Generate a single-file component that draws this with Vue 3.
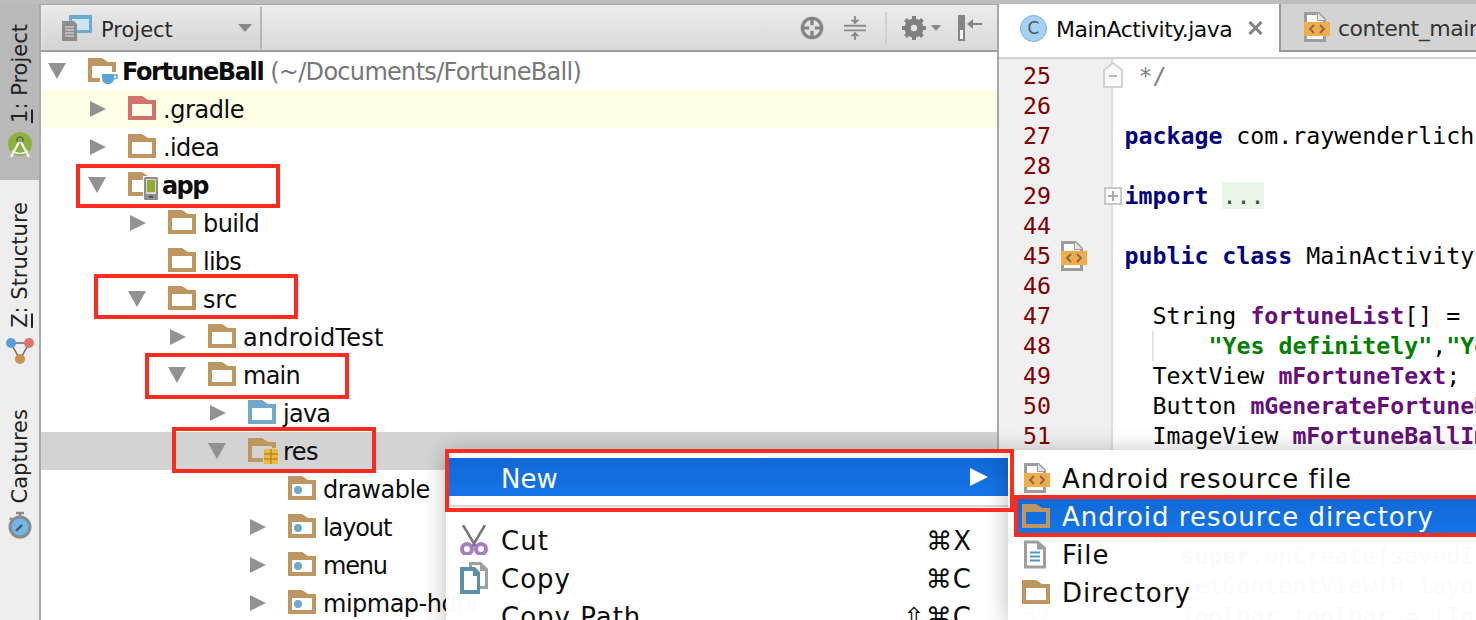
<script setup>
const tree = [
  { level: 0, arrow: 'down', text: 'FortuneBall', bold: true, track: -1.4, hint: ' (~/Documents/FortuneBall)', badge: 'cup' },
  { level: 1, arrow: 'right', text: '.gradle', tint: 'red', yellow: true, track: -0.45 },
  { level: 1, arrow: 'right', text: '.idea', track: -0.6 },
  { level: 1, arrow: 'down', text: 'app', bold: true, track: -1.6, badge: 'phone' },
  { level: 2, arrow: 'right', text: 'build', track: -0.6 },
  { level: 2, text: 'libs', track: -0.75 },
  { level: 2, arrow: 'down', text: 'src', track: -0.3 },
  { level: 3, arrow: 'right', text: 'androidTest', track: 0.2 },
  { level: 3, arrow: 'down', text: 'main', track: -0.75 },
  { level: 4, arrow: 'right', text: 'java', tint: 'blue', track: -0.75 },
  { level: 4, arrow: 'down', text: 'res', badge: 'db', selected: true, track: -0.6 },
  { level: 5, text: 'drawable', badge: 'dot', track: -0.5 },
  { level: 5, arrow: 'right', text: 'layout', badge: 'dot', track: -1.1 },
  { level: 5, arrow: 'right', text: 'menu', badge: 'dot', track: -1.2 },
  { level: 5, arrow: 'right', text: 'mipmap-hdpi', badge: 'dot', track: -0.5 },
]

const code = [
  { n: 25, parts: [[' */', 'cm']], fold: 'end' },
  { n: 26, parts: [] },
  { n: 27, parts: [['package', 'kw'], [' com.raywenderlich.fortuneball;', '']] },
  { n: 28, parts: [] },
  { n: 29, parts: [['import', 'kw'], [' ', ''], ['...', 'folded']], fold: 'plus' },
  { n: 44, parts: [] },
  { n: 45, parts: [['public class', 'kw'], [' MainActivity extends', '']], mark: true },
  { n: 46, parts: [] },
  { n: 47, parts: [['  String ', ''], ['fortuneList', 'fd'], ['[] = {', '']] },
  { n: 48, parts: [['      ', ''], ['"Yes definitely"', 'st'], [',', ''], ['"Yes"', 'st']], guide: true },
  { n: 49, parts: [['  TextView ', ''], ['mFortuneText', 'fd'], [';', '']] },
  { n: 50, parts: [['  Button ', ''], ['mGenerateFortuneButton', 'fd'], [';', '']] },
  { n: 51, parts: [['  ImageView ', ''], ['mFortuneBallImage', 'fd'], [';', '']] },
  { n: 52, parts: [] },
  { n: 53, parts: [['  @Override', 'an']] },
  { n: 54, parts: [['  ', ''], ['protected void', 'kw'], [' onCreate(Bundle', '']] },
  { n: 55, parts: [['    ', ''], ['super', 'kw'], ['.onCreate(savedInstanceState);', '']] },
  { n: 56, parts: [['    setContentView(R.layout.activity_main);', '']] },
  { n: 57, parts: [['    Toolbar toolbar = (Toolbar) findViewById', '']] },
]

const mainMenu = [
  { text: 'Cut', key: '⌘X', icon: 'scissors' },
  { text: 'Copy', key: '⌘C', icon: 'copy' },
  { text: 'Copy Path', key: '⇧⌘C' },
]

const subMenu = [
  { text: 'Android resource file', icon: 'xml' },
  { text: 'Android resource directory', icon: 'folder', active: true },
  { text: 'File', icon: 'file' },
  { text: 'Directory', icon: 'folder' },
]
</script>

<template>
  <div class="ide">
    <svg class="defs" width="0" height="0" aria-hidden="true">
      <symbol id="xml" viewBox="0 0 26 30">
        <path d="M0 0h15l7 7v23H0z" fill="#9c9c9c" />
        <path d="M3 3h10v6h6v18H3z" fill="#fff" />
        <path d="M14 1l7 7h-7z" fill="#e6e6e6" />
        <rect y="10" width="26" height="14" fill="#f4ab4c" />
        <path d="M10 13l-4 4 4 4M16 13l4 4-4 4" fill="none" stroke="#7b6a50" stroke-width="1.800" />
      </symbol>
    </svg>

    <aside class="strip">
      <div class="strip-tab active">
        <span class="vtext"><u>1</u>: Project</span>
        <svg class="strip-icon" width="28" height="28" viewBox="0 0 28 28">
          <circle cx="14" cy="12" r="12" fill="#8cb13f" />
          <circle cx="14" cy="8" r="3" fill="none" stroke="#666" stroke-width="1.500" />
          <path d="M13 10L5 25M15 10l8 15" stroke="#f3f3f3" stroke-width="2.400" fill="none" />
          <path d="M6 19q8 5 16 0" stroke="#f3f3f3" stroke-width="1.600" fill="none" />
        </svg>
      </div>
      <div class="strip-tab second">
        <span class="vtext"><u>Z</u>: Structure</span>
        <svg class="strip-icon" width="28" height="28" viewBox="0 0 28 28">
          <path d="M5 6h18L14 23z" fill="none" stroke="#666" stroke-width="1.500" />
          <circle cx="5" cy="6" r="5" fill="#5a9fd8" />
          <circle cx="23" cy="6" r="5" fill="#e0726f" />
          <circle cx="14" cy="22" r="5" fill="#c9924d" />
        </svg>
      </div>
      <div class="strip-tab third">
        <span class="vtext">Captures</span>
        <svg class="strip-icon" width="28" height="28" viewBox="0 0 28 28">
          <path d="M10 2h8M14 2v5M4 7l3 3" stroke="#8a8a8a" stroke-width="2.500" fill="none" />
          <circle cx="14" cy="16" r="10" fill="#6db7ea" stroke="#8a8a8a" stroke-width="3" />
          <path d="M10 20l6-6" stroke="#555" stroke-width="2.400" />
        </svg>
      </div>
    </aside>

    <section class="project">
      <header class="toolbar">
        <div class="combo">
          <svg width="30" height="26" viewBox="0 0 30 26">
            <rect x="7" y="0" width="23" height="18" fill="#6fa9cf" />
            <rect x="10" y="4" width="17" height="11" fill="#cfe4f2" />
            <path d="M0 6h12l3 3v17H0z" fill="#8d8d8d" />
            <path d="M3 12h9M3 15h9M3 18h9M3 21h9" stroke="#e8e8e8" />
          </svg>
          <span class="combo-label">Project</span>
          <i class="combo-caret"></i>
        </div>
        <div class="tools">
          <svg width="24" height="24" viewBox="0 0 26 26">
            <circle cx="13" cy="13" r="10.500" fill="none" stroke="#848484" stroke-width="3.500" />
            <path d="M13 2v8M13 16v8M2 13h8M16 13h8" stroke="#848484" stroke-width="3.500" />
          </svg>
          <svg class="tool-collapse" width="22" height="26" viewBox="0 0 24 26">
            <path d="M0 10.500h24M0 15.500h24" stroke="#8a8a8a" stroke-width="2" />
            <path d="M12 0v6M12 26v-6" stroke="#8a8a8a" stroke-width="2" />
            <path d="M7 4h10l-5 5zM7 22h10l-5-5z" fill="#8a8a8a" />
          </svg>
          <i class="tool-sep"></i>
          <svg width="24" height="24" viewBox="0 0 24 24">
            <circle cx="12" cy="12" r="7" fill="none" stroke="#7f7f7f" stroke-width="5" />
            <path d="M12 0v24M0 12h24M3.500 3.500l17 17M20.500 3.500l-17 17" stroke="#7f7f7f" stroke-width="4" />
            <circle cx="12" cy="12" r="3.200" fill="#e4e4e4" />
          </svg>
          <i class="gear-caret"></i>
          <svg width="24" height="26" viewBox="0 0 24 26">
            <path d="M1 1h5v24H1z" fill="#fff" stroke="#858585" stroke-width="2" />
            <rect x="1" y="1" width="5" height="14" fill="#858585" />
            <path d="M12 9h12" stroke="#858585" stroke-width="2" />
            <path d="M9 9l6-5v10z" fill="#858585" />
          </svg>
        </div>
      </header>

      <ul class="tree">
        <li
          v-for="row in tree"
          :key="row.text"
          class="row"
          :class="{ yellow: row.yellow, selected: row.selected }"
          :style="{ paddingLeft: 7 + row.level * 40 + 'px' }"
        >
          <span class="arrow-box">
            <i v-if="row.arrow" :class="'arrow-' + row.arrow"></i>
          </span>
          <svg class="folder" :class="row.tint" width="28" height="24" viewBox="0 0 28 24">
            <path fill-rule="evenodd" d="M0 0h14l6 4h8v20H0zM4 8v12h20V8z" />
            <circle v-if="row.badge === 'dot'" cx="10" cy="14" r="4" fill="#6fa9d0" />
            <g v-if="row.badge === 'cup'">
              <path d="M12 14h18v12H12z" fill="#fff" />
              <path d="M14 16h12v4q0 6-6 6t-6-6z" fill="#5aa6d8" />
              <path d="M26 17h3v3l-3 1" fill="none" stroke="#5aa6d8" stroke-width="1.500" />
            </g>
            <g v-if="row.badge === 'phone'">
              <rect x="15" y="4" width="16" height="25" fill="#fff" />
              <rect x="16" y="5" width="14" height="23" rx="1.500" fill="#8d8d8d" />
              <rect x="18" y="7" width="10" height="15" fill="#d9d9d9" />
              <rect x="19" y="8" width="8" height="12" fill="#8fae2f" />
              <rect x="21" y="24" width="4" height="1.500" fill="#444" />
            </g>
            <g v-if="row.badge === 'db'">
              <rect x="15" y="10" width="16" height="17" fill="#d3d3d3" />
              <rect x="16" y="11" width="14" height="15" fill="#edb93c" />
              <path d="M16 16h14M16 21h14M23 11v15" stroke="#a5701a" stroke-width="1" />
            </g>
          </svg>
          <span
            class="label"
            :class="{ bold: row.bold }"
            :style="{ letterSpacing: row.track + 'px' }"
          >{{ row.text }}</span>
          <span v-if="row.hint" class="hint">{{ row.hint }}</span>
        </li>
      </ul>
    </section>

    <section class="editor">
      <nav class="tabs">
        <div class="tab current">
          <span class="class-icon">C</span>
          <span class="tab-label">MainActivity.java</span>
          <svg class="close" width="15" height="14" viewBox="0 0 15 14">
            <path d="M1.500 1l12 12M13.500 1l-12 12" stroke="#808080" stroke-width="3" />
          </svg>
        </div>
        <div class="tab other">
          <svg width="26" height="30"><use href="#xml" /></svg>
          <span class="tab-label">content_main.xml</span>
        </div>
      </nav>
      <div class="code-area">
        <div class="gutter">
          <div v-for="l in code" :key="l.n" class="gutter-line">
            <span class="num">{{ l.n }}</span>
            <svg v-if="l.mark" class="mark" width="26" height="30"><use href="#xml" /></svg>
            <svg v-if="l.fold === 'end'" class="fold end" width="20" height="26" viewBox="0 0 20 26">
              <path d="M1 8l9-7 9 7v17H1z" fill="#fafafa" stroke="#d2d2d2" stroke-width="2" />
              <path d="M6 14h8" stroke="#bbb" stroke-width="2" />
            </svg>
            <svg v-if="l.fold === 'plus'" class="fold" width="18" height="18" viewBox="0 0 18 18">
              <rect x="1" y="1" width="16" height="16" fill="#fafafa" stroke="#c8c8c8" stroke-width="2" />
              <path d="M4 9h10M9 4v10" stroke="#aaa" stroke-width="2" />
            </svg>
          </div>
        </div>
        <div class="code">
          <div v-for="l in code" :key="l.n" class="code-line" :class="{ guided: l.guide }">
            <span v-for="(p, i) in l.parts" :key="i" :class="p[1]">{{ p[0] }}</span>
          </div>
        </div>
      </div>
    </section>

    <div class="menu main-menu">
      <div class="menu-row active new-row">
        <span class="menu-text">New</span>
        <i class="sub-arrow"></i>
      </div>
      <hr class="menu-sep" />
      <div v-for="m in mainMenu" :key="m.text" class="menu-row">
        <span class="menu-icon">
          <svg v-if="m.icon === 'scissors'" width="28" height="30" viewBox="0 0 28 30">
            <path d="M3 0l13 22M25 0L12 22" stroke="#777" stroke-width="2.500" fill="none" />
            <circle cx="7" cy="24" r="5" fill="#fff" stroke="#a77fc0" stroke-width="4" />
            <circle cx="21" cy="24" r="5" fill="#fff" stroke="#a77fc0" stroke-width="4" />
          </svg>
          <svg v-if="m.icon === 'copy'" width="28" height="32" viewBox="0 0 28 32">
            <path d="M9 0h12l7 7v20H9z" fill="#a0a0a0" />
            <path d="M12 3h8v6h5v15H12z" fill="#fff" />
            <path d="M0 5h15l5 5v22H0z" fill="#5e8eae" />
            <path d="M4 9h9v5h4v14H4z" fill="#fff" />
          </svg>
        </span>
        <span class="menu-text">{{ m.text }}</span>
        <span class="menu-key">{{ m.key }}</span>
      </div>
    </div>

    <div class="menu sub-menu">
      <div v-for="s in subMenu" :key="s.text" class="menu-row" :class="{ active: s.active }">
        <span class="sub-icon">
          <svg v-if="s.icon === 'xml'" class="doc" width="26" height="30"><use href="#xml" /></svg>
          <svg v-if="s.icon === 'folder'" class="folder" width="28" height="24" viewBox="0 0 28 24">
            <path fill-rule="evenodd" d="M0 0h14l6 4h8v20H0zM4 8v12h20V8z" />
          </svg>
          <svg v-if="s.icon === 'file'" class="doc" width="22" height="29" viewBox="0 0 22 28">
            <path d="M0 0h14l8 7v21H0z" fill="#9e9e9e" />
            <path d="M3 3h10v6h6v16H3z" fill="#fff" />
            <path d="M6 12h10M6 16h10M6 20h10" stroke="#4b97c6" stroke-width="2" />
          </svg>
        </span>
        <span class="menu-text">{{ s.text }}</span>
      </div>
    </div>

    <i class="callout c-app"></i>
    <i class="callout c-src"></i>
    <i class="callout c-main"></i>
    <i class="callout c-res"></i>
    <i class="callout c-new"></i>
    <i class="callout c-dir"></i>
  </div>
</template>

<style>
html, body { margin: 0; overflow: hidden; background: #fff; }
</style>

<style scoped>
.ide {
  position: relative;
  width: 1476px;
  height: 620px;
  overflow: hidden;
  display: flex;
  font-family: "DejaVu Sans", sans-serif;
  color: #0c0c0c;
  background: #fff;
  border-top: 4px solid #bdbdbd;
  box-sizing: border-box;
}
.defs { position: absolute; }

/* left strip */
.strip {
  width: 41px;
  flex: none;
  background: #eeeeee;
  border-right: 2px solid #a9a9a9;
  box-sizing: border-box;
  display: flex;
  flex-direction: column;
  padding-left: 1px;
}
.strip-tab {
  display: flex;
  flex-direction: column;
  align-items: center;
}
.strip-tab.active { background: #b9b9b9; height: 176px; margin-left: -1px; padding-left: 1px; padding-top: 20px; box-sizing: border-box; gap: 9px; }
.strip-tab.second { padding-top: 22px; gap: 9px; }
.strip-tab.third { padding-top: 44px; gap: 8px; }
.vtext {
  writing-mode: vertical-rl;
  transform: rotate(180deg);
  font-size: 21px;
  line-height: 24px;
  white-space: nowrap;
  color: #222;
}
.strip-icon { flex: none; }

/* project panel */
.project {
  width: 956px;
  flex: none;
  border-right: 2px solid #a8a8a8;
  box-sizing: content-box;
  min-width: 0;
}
.toolbar {
  height: 48px;
  box-sizing: border-box;
  display: flex;
  align-items: center;
  justify-content: space-between;
  background: linear-gradient(#ececec, #d9d9d9);
  border-top: 1px solid #a6a6a6;
  border-bottom: 2px solid #9d9d9d;
  padding-left: 3px;
}
.combo {
  width: 218px;
  height: 42px;
  box-sizing: border-box;
  display: flex;
  align-items: center;
  padding-left: 18px;
  gap: 9px;
  background: linear-gradient(#e9e9e9, #d3d3d3);
  border-right: 2px solid #b5b5b5;
  font-size: 21px;
  color: #2a2a2a;
}
.combo-label { flex: 1; padding-top: 4px; }
.combo-caret {
  border: 7px solid transparent;
  border-top: 8px solid #888;
  border-bottom: 0;
  margin-right: 8px;
}
.tools {
  display: flex;
  align-items: center;
  padding-right: 15px;
}
.tool-collapse { margin-left: 20px; }
.tool-sep { width: 2px; height: 32px; background: #cfcfcf; margin: 0 15px 0 19px; }
.gear-caret {
  border: 5px solid transparent;
  border-top: 6px solid #888;
  border-bottom: 0;
  margin: 0 17px 0 5px;
}

.tree { list-style: none; margin: 0; padding: 0; }
.row {
  height: 38px;
  display: flex;
  align-items: center;
  white-space: nowrap;
  font-size: 24px;
}
.row.yellow { background: #ffffe6; }
.row.selected { background: #d3d3d3; }
.arrow-box { width: 40px; height: 38px; flex: none; display: flex; align-items: center; }
.arrow-right {
  display: block;
  margin-left: 2px;
  border-left: 16px solid #929292;
  border-top: 8px solid transparent;
  border-bottom: 8px solid transparent;
}
.arrow-down {
  display: block;
  border-top: 16px solid #929292;
  border-left: 9px solid transparent;
  border-right: 9px solid transparent;
}
.folder { flex: none; overflow: visible; fill: #bd9661; margin-bottom: 2px; }
.folder.red { fill: #d1736a; }
.folder.blue { fill: #72a8c9; }
.label { margin-left: 7px; padding-top: 2px; }
.label.bold { font-weight: 700; margin-left: 6px; }
.hint { color: #777; white-space: pre; letter-spacing: -0.7px; padding-top: 2px; }

/* editor */
.editor { flex: 1; min-width: 0; display: flex; flex-direction: column; }
.tabs {
  height: 53px;
  flex: none;
  display: flex;
  border-bottom: 2px solid #d0d0d0;
  box-sizing: content-box;
  font-size: 22px;
}
.tab { display: flex; align-items: center; white-space: nowrap; }
.tab.current {
  width: 280px;
  flex: none;
  box-sizing: border-box;
  padding-left: 21px;
  gap: 9px;
  height: 48px;
}
.tab-label { letter-spacing: -0.5px; padding-top: 2px; }
.tab.other {
  flex: 1;
  height: 48px;
  box-sizing: border-box;
  padding-left: 23px;
  gap: 8px;
  background: #d3d3d3;
  border-left: 2px solid #999;
  border-bottom: 2px solid #999;
  color: #333;
}
.class-icon {
  width: 27px;
  height: 27px;
  border-radius: 50%;
  background: #a5d2f3;
  border: 1px solid #6fb1e0;
  display: flex;
  align-items: center;
  justify-content: center;
  font-size: 17px;
  color: #555;
  flex: none;
  box-sizing: border-box;
}
.close { flex: none; margin-left: 7px; }
.code-area { display: flex; flex: 1; min-height: 0; overflow: hidden; }
.gutter {
  width: 114px;
  flex: none;
  box-sizing: border-box;
  background: #f0f0f0;
  border-right: 2px solid #dcdcdc;
  padding-top: 2px;
}
.gutter-line {
  position: relative;
  height: 30px;
  font: 23.25px/30px "DejaVu Sans Mono", monospace;
  color: #800000;
  padding-left: 24px;
}
.mark { position: absolute; left: 62px; top: 0; }
.fold { position: absolute; left: 105px; top: 6px; }
.fold.end { top: 1px; left: 104px; }
.code { flex: 1; min-width: 0; padding-top: 2px; padding-left: 11.4px; }
.code-line {
  height: 30px;
  font: 23.25px/30px "DejaVu Sans Mono", monospace;
  white-space: pre;
  color: #000;
  position: relative;
}
.guided::before {
  content: "";
  position: absolute;
  left: 28px;
  top: 0;
  bottom: 0;
  width: 2px;
  background: #e4e4e4;
}
.kw { color: #000080; font-weight: 700; }
.fd { color: #660e7a; font-weight: 700; }
.st { color: #008000; font-weight: 700; }
.cm { color: #808080; }
.an { color: #808000; }
.folded { background: #e9f5e6; color: #444; }

/* menus */
.menu {
  position: absolute;
  background: rgba(255, 255, 255, 0.98);
  box-shadow: 0 2px 22px rgba(0, 0, 0, 0.28);
  font-size: 26px;
}
.main-menu { left: 446px; top: 446px; width: 562px; height: 180px; padding-top: 8px; box-sizing: border-box; }
.sub-menu { left: 1008px; top: 446px; width: 468px; height: 170px; padding-top: 9px; box-sizing: border-box; }
.menu-row {
  height: 38px;
  display: flex;
  align-items: center;
  white-space: nowrap;
}
.main-menu .menu-row { padding-left: 14px; padding-right: 36px; }
.main-menu .new-row { padding-left: 55px; padding-right: 20px; justify-content: space-between; }
.menu-row.active { background: linear-gradient(#1168d6, #1575e8); color: #fff; }
.sub-menu .menu-row { margin-left: 10px; padding-left: 4px; }
.menu-sep { border: 0; border-top: 2px solid #d9d9d9; margin: 9px 0 14px; }
.menu-icon { width: 41px; flex: none; display: flex; }
.menu-text { flex: none; letter-spacing: 1px; padding-top: 1px; }
.new-row .menu-text { padding-top: 3px; letter-spacing: 0; }
.menu-key { margin-left: auto; letter-spacing: 1px; padding-top: 1px; }
.sub-arrow {
  border-left: 18px solid #fff;
  border-top: 9px solid transparent;
  border-bottom: 9px solid transparent;
}
.sub-icon { width: 40px; flex: none; display: flex; }
.sub-icon .folder { margin: 0; }
.sub-icon .doc { margin-left: 2px; }

.callout { position: absolute; border: 4px solid #fe2b1f; box-sizing: border-box; }
.c-app { left: 76px; top: 160px; width: 204px; height: 44px; }
.c-src { left: 94px; top: 270px; width: 204px; height: 45px; }
.c-main { left: 145px; top: 349px; width: 204px; height: 46px; }
.c-res { left: 172px; top: 423px; width: 204px; height: 46px; }
.c-new { left: 445px; top: 445px; width: 569px; height: 63px; }
.c-dir { left: 1014px; top: 491px; width: 470px; height: 42px; }
</style>
